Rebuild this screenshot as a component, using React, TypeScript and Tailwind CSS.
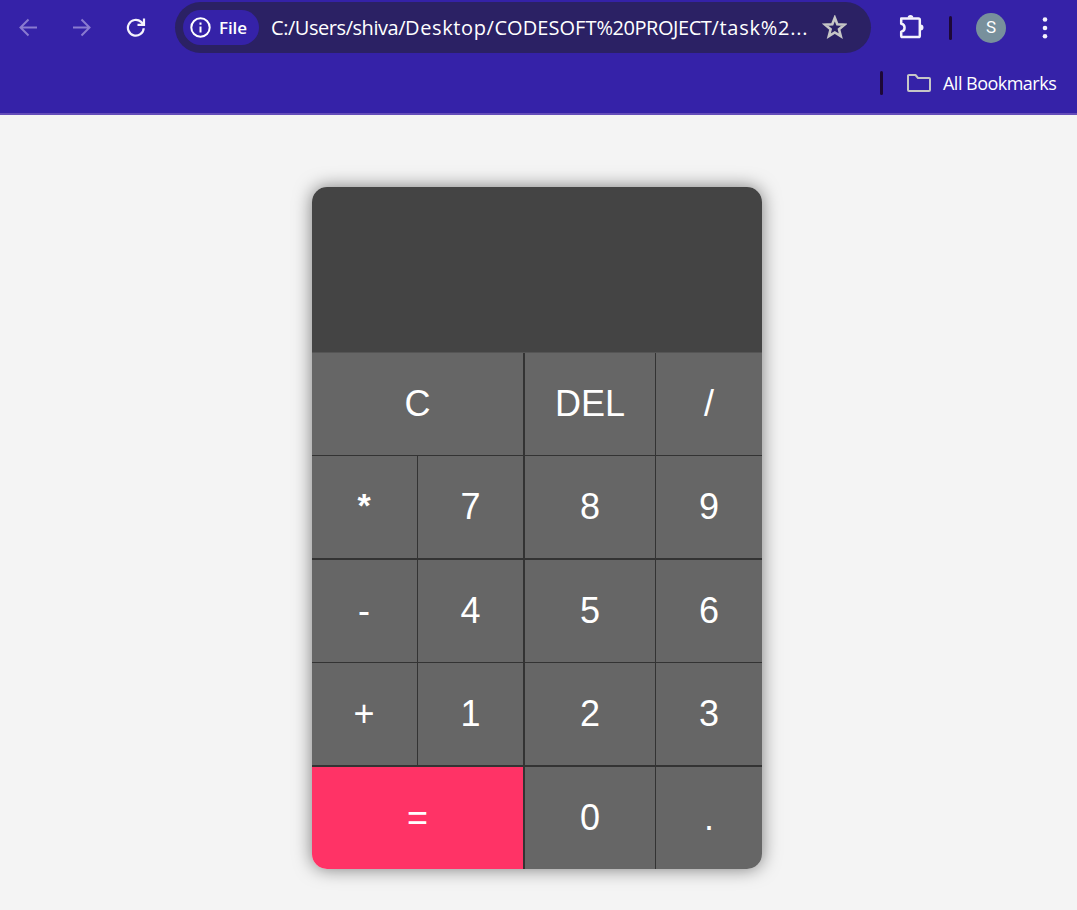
import React from "react";

type Key = { label: string; className: string };

const keys: Key[] = [
  { label: "C", className: "col-span-2 border-r-2 border-b bg-[#666666]" },
  { label: "DEL", className: "border-r border-b bg-[#666666]" },
  { label: "/", className: "border-b bg-[#666666]" },
  { label: "*", className: "border-r border-b-2 bg-[#666666] pr-px pb-1 text-[34px] font-bold" },
  { label: "7", className: "border-r-2 border-b-2 bg-[#666666]" },
  { label: "8", className: "border-r border-b-2 bg-[#666666]" },
  { label: "9", className: "border-b-2 bg-[#666666]" },
  { label: "-", className: "border-r border-b bg-[#666666] pr-px" },
  { label: "4", className: "border-r-2 border-b bg-[#666666]" },
  { label: "5", className: "border-r border-b bg-[#666666]" },
  { label: "6", className: "border-b bg-[#666666]" },
  { label: "+", className: "border-r border-b-2 bg-[#666666] pr-px" },
  { label: "1", className: "border-r-2 border-b-2 bg-[#666666]" },
  { label: "2", className: "border-r border-b-2 bg-[#666666]" },
  { label: "3", className: "border-b-2 bg-[#666666]" },
  { label: "=", className: "col-span-2 border-r-2 bg-[#ff3366]" },
  { label: "0", className: "border-r bg-[#666666]" },
  { label: ".", className: "bg-[#666666]" },
];

function BrowserBar() {
  return (
    <header className="h-[115px] border-b-2 border-[#644db9] bg-[#3522a8] font-['Open_Sans','Noto_Sans',sans-serif] text-white">
      <div className="flex h-[55px] items-center pl-[18px]">
        <svg className="size-5 shrink-0" viewBox="0 0 20 20" fill="none" stroke="#8a7bd0" strokeWidth="2">
          <path d="M19 9.500H2.500M10.500 1.500l-8 8 8 8" />
        </svg>
        <svg className="ml-[34px] size-5 shrink-0" viewBox="0 0 20 20" fill="none" stroke="#8a7bd0" strokeWidth="2">
          <path d="M1 9.500h16.500M9.500 1.500l8 8-8 8" />
        </svg>
        <svg className="ml-[34px] size-5 shrink-0" viewBox="0 0 20 20" fill="none" stroke="#f4f2fc" strokeWidth="2.200">
          <path d="M17.700 10.200a7.900 7.900 0 1 1-2.600-6.300L17.700 6.500M18 .500v6.300h-6.500" />
        </svg>
        <div className="ml-[29px] flex h-[51px] w-[696px] shrink-0 items-center rounded-full bg-[#2b2164] pl-2">
          <div className="flex h-[35px] w-[76px] shrink-0 items-center rounded-full bg-[#3522a8] pl-[7px]">
            <svg className="size-[21px] shrink-0" viewBox="0 0 21 21" fill="none" stroke="white" strokeWidth="2">
              <circle cx="10.500" cy="10.500" r="9.200" />
              <path d="M10.500 9.500v6M10.500 5.500v2.200" />
            </svg>
            <span className="ml-2 text-[17px] font-semibold leading-[24px] tracking-[-0.1px]">File</span>
          </div>
          <span className="ml-3 w-[539px] shrink-0 text-[20px] leading-[28px] tracking-[-0.45px] whitespace-nowrap">
            C:/Users/shiva/<span className="tracking-[0.6px]">Desktop/</span><span className="tracking-[0.05px]">CODESOFT</span>%20PROJECT<span className="tracking-[0.75px]">/task%2...</span>
          </span>
          <svg className="ml-[12px] size-[25px] shrink-0" viewBox="0 0 25 25" fill="none" stroke="#c6c6c6" strokeWidth="2.600">
            <path d="M12.800 2.800l2.500 6.400 7.200.500-5.500 4.500 1.800 7-6-3.700-6 3.700 1.800-7-5.500-4.500 7.200-.500z" />
          </svg>
        </div>
        <svg className="ml-[27px] size-[28px] shrink-0" viewBox="0 0 28 28" fill="none">
          <path d="M3.200 4.600H20.500Q21.800 4.600 21.800 5.900V21.700Q21.800 23 20.500 23H4.500Q3.200 23 3.200 21.700V17.700A4 4 0 0 0 3.200 9.800V5.900Q3.200 4.600 4.500 4.600Z" stroke="#f4f2fc" strokeWidth="2.500" strokeLinejoin="round" />
          <path d="M9.700 3.800a2.800 2.800 0 0 1 5.600 0zM22.500 10.500a3 3 0 0 1 0 6z" fill="#f4f2fc" />
        </svg>
        <div className="ml-[23px] h-6 w-[3px] shrink-0 rounded-full bg-[#1d0837]" />
        <div className="ml-6 flex size-[30px] shrink-0 items-center justify-center rounded-full bg-[#78909c] pt-px font-[Roboto,sans-serif] text-[17px]">S</div>
        <svg className="ml-[34px] h-[22px] w-[10px] shrink-0" viewBox="0 0 10 22" fill="#f4f2fc">
          <circle cx="5" cy="2.500" r="2.300" />
          <circle cx="5" cy="11" r="2.300" />
          <circle cx="5" cy="19.300" r="2.300" />
        </svg>
      </div>
      <div className="flex h-[56px] items-center justify-end pr-[21px]">
        <div className="h-6 w-[3px] rounded-full bg-[#1d0837]" />
        <svg className="ml-6 h-[18px] w-6" viewBox="0 0 24 18" fill="none" stroke="#c6c6c6" strokeWidth="2" strokeLinejoin="round">
          <path d="M1 1.500Q1 1 2 1h6.500l2.500 3h11q1 0 1 1v11q0 1-1 1H2q-1 0-1-1z" />
        </svg>
        <span className="ml-3 w-[113px] text-[18px] leading-6 tracking-[-0.52px] whitespace-nowrap">All Bookmarks</span>
      </div>
    </header>
  );
}

export default function App() {
  return (
    <div className="h-[910px] overflow-hidden bg-[#f4f4f4]">
      <BrowserBar />
      <main className="pt-[72px] pl-[312px]">
        <div className="w-[450px] overflow-hidden rounded-[15px] shadow-[0_0_18px_rgba(0,0,0,0.5)]">
          <div className="h-[166px] border-b border-[#555555] bg-[#444444]" />
          <div className="grid grid-cols-[106px_107px_131px_106px] grid-rows-[103px_104px_103px_104px_102px] font-['Liberation_Sans',Arial,sans-serif] text-[36px] text-white">
            {keys.map((key) => (
              <button key={key.label} className={`flex items-center justify-center border-[#333333] ${key.className}`}>
                {key.label}
              </button>
            ))}
          </div>
        </div>
      </main>
    </div>
  );
}
